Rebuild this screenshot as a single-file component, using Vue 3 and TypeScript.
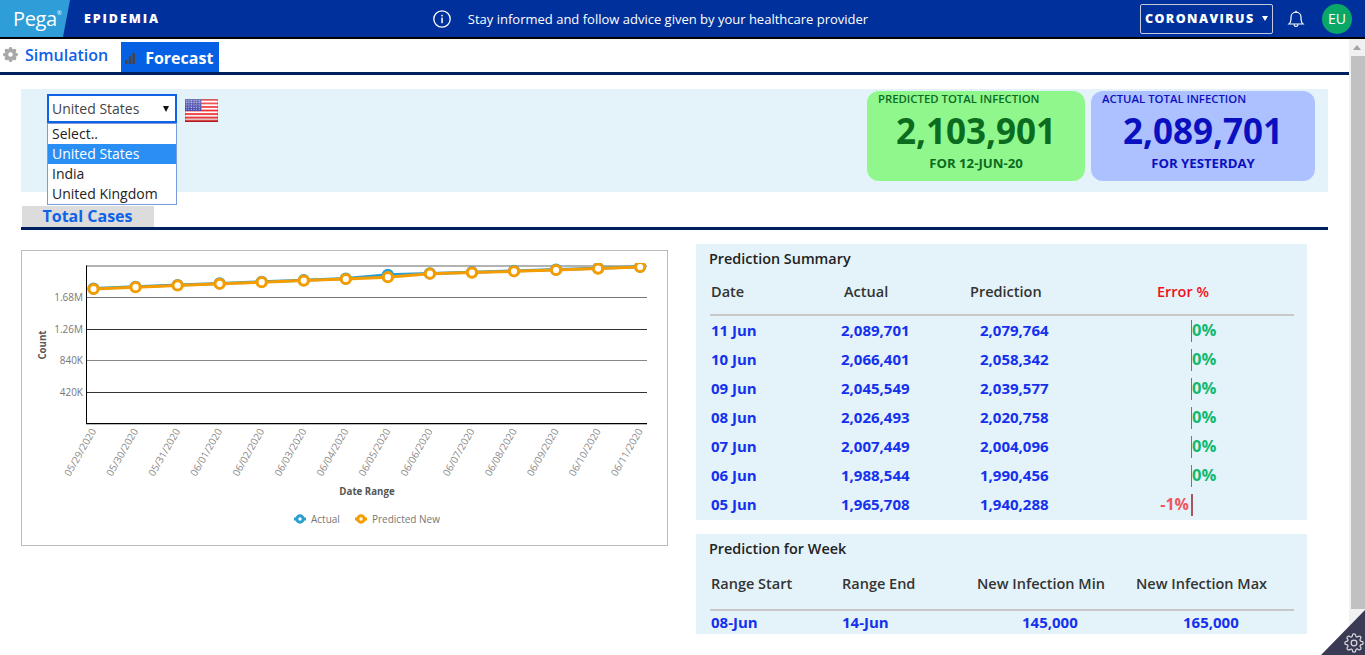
<script setup lang="ts">
const gear =
  'M19.4 15a1.65 1.65 0 0 0 .33 1.82l.06.06a2 2 0 0 1 0 2.83 2 2 0 0 1-2.83 0l-.06-.06a1.65 1.65 0 0 0-1.82-.33 1.65 1.65 0 0 0-1 1.51V21a2 2 0 0 1-2 2 2 2 0 0 1-2-2v-.09A1.65 1.65 0 0 0 9 19.4a1.65 1.65 0 0 0-1.82.33l-.06.06a2 2 0 0 1-2.83 0 2 2 0 0 1 0-2.83l.06-.06a1.65 1.65 0 0 0 .33-1.82 1.65 1.65 0 0 0-1.51-1H3a2 2 0 0 1-2-2 2 2 0 0 1 2-2h.09A1.65 1.65 0 0 0 4.6 9a1.65 1.65 0 0 0-.33-1.82l-.06-.06a2 2 0 0 1 0-2.83 2 2 0 0 1 2.83 0l.06.06a1.65 1.65 0 0 0 1.82.33H9a1.65 1.65 0 0 0 1-1.51V3a2 2 0 0 1 2-2 2 2 0 0 1 2 2v.09a1.65 1.65 0 0 0 1 1.51 1.65 1.65 0 0 0 1.82-.33l.06-.06a2 2 0 0 1 2.83 0 2 2 0 0 1 0 2.83l-.06.06a1.65 1.65 0 0 0-.33 1.82V9a1.65 1.65 0 0 0 1.51 1H21a2 2 0 0 1 2 2 2 2 0 0 1-2 2h-.09a1.65 1.65 0 0 0-1.51 1z'

const options = ['Select..', 'United States', 'India', 'United Kingdom']

const rows = [
  { date: '11 Jun', actual: '2,089,701', pred: '2,079,764', err: '0%', neg: false },
  { date: '10 Jun', actual: '2,066,401', pred: '2,058,342', err: '0%', neg: false },
  { date: '09 Jun', actual: '2,045,549', pred: '2,039,577', err: '0%', neg: false },
  { date: '08 Jun', actual: '2,026,493', pred: '2,020,758', err: '0%', neg: false },
  { date: '07 Jun', actual: '2,007,449', pred: '2,004,096', err: '0%', neg: false },
  { date: '06 Jun', actual: '1,988,544', pred: '1,990,456', err: '0%', neg: false },
  { date: '05 Jun', actual: '1,965,708', pred: '1,940,288', err: '-1%', neg: true },
]

const dates = [
  '05/29/2020', '05/30/2020', '05/31/2020', '06/01/2020', '06/02/2020', '06/03/2020', '06/04/2020',
  '06/05/2020', '06/06/2020', '06/07/2020', '06/08/2020', '06/09/2020', '06/10/2020', '06/11/2020',
]
const xs = dates.map((_, i) => 93.5 + i * 42.05)
const predY = [289, 287.2, 285.4, 283.8, 282.2, 280.6, 279, 277.2, 273.7, 272.6, 271.3, 270, 268.6, 267]
const actY = [288.6, 286.8, 285, 283.4, 281.8, 280.2, 278.6, 274.8, 273.4, 272.2, 270.9, 269.6, 268.2, 266.8]
const toPts = (ys: number[]) => ys.map((y, i) => `${xs[i]},${y}`).join(' ')
const grid = [
  { y: 297.5, label: '1.68M', color: '#777' },
  { y: 329.5, label: '1.26M', color: '#333' },
  { y: 360.5, label: '840K', color: '#888' },
  { y: 392.5, label: '420K', color: '#333' },
]
const stripes = [0, 2, 4, 6, 8, 10, 12].map((i) => 99 + (i * 23) / 13)
</script>

<template>
  <div class="app">
    <header class="topbar">
      <div class="logo"><span class="logo-text">Pega</span><sup class="reg">®</sup></div>
      <div class="appname">EPIDEMIA</div>
      <div class="notice">
        <svg class="info" width="20" height="20" viewBox="0 0 20 20">
          <circle cx="10" cy="10" r="8.2" fill="none" stroke="#fff" stroke-width="1.3" />
          <rect x="9.3" y="8.6" width="1.5" height="5.6" fill="#fff" />
          <rect x="9.3" y="5.8" width="1.5" height="1.6" fill="#fff" />
        </svg>
        <span>Stay informed and follow advice given by your healthcare provider</span>
      </div>
      <div class="tools">
        <div class="scope"><span>CORONAVIRUS</span><i class="caret"></i></div>
        <svg class="bell" width="20" height="20" viewBox="0 0 20 20" fill="none" stroke="#fff" stroke-width="1.2">
          <path d="M3 15c1.3-1.2 2-2.6 2-5V8.2C5 5.4 7.2 3.2 10 3.2s5 2.2 5 5V10c0 2.4.7 3.8 2 5z" />
          <path d="M8 15.4c.1 1.3.9 2.1 2 2.1s1.9-.8 2-2.1" />
          <path d="M10 1.8v1.4" />
        </svg>
        <div class="avatar">EU</div>
      </div>
    </header>

    <div class="body">
      <main class="main">
        <nav class="tabs">
          <div class="tab">
            <svg width="15" height="15" viewBox="0 0 24 24"><path :d="gear" fill="#a8a8a8" stroke="#a8a8a8" stroke-width="2" /><circle cx="12" cy="12" r="3.6" fill="#fff" /></svg>
            <span>Simulation</span>
          </div>
          <div class="tab active">
            <svg width="12" height="14" viewBox="0 0 12 14"><rect x="1" y="9" width="2.6" height="4" fill="#444" /><rect x="4.7" y="5.5" width="2.6" height="7.5" fill="#444" /><rect x="8.4" y="2" width="2.6" height="11" fill="#444" /></svg>
            <span>Forecast</span>
          </div>
        </nav>

        <section class="filter">
          <div class="picker">
            <div class="select"><span>United States</span><i class="sel-caret"></i></div>
            <ul class="menu">
              <li v-for="o in options" :key="o" :class="{ on: o === 'United States' }">{{ o }}</li>
            </ul>
          </div>
          <svg class="flag" width="33" height="23" viewBox="185 99 33 23">
            <defs>
              <pattern id="stars" x="185" y="99" width="2.6" height="2.4" patternUnits="userSpaceOnUse">
                <rect x="0.6" y="0.6" width="1.1" height="1" fill="#c9cbf0" />
              </pattern>
              <linearGradient id="gloss" x1="0" x2="0" y1="0" y2="1">
                <stop offset="0" stop-color="#fff" stop-opacity="0.3" />
                <stop offset="0.55" stop-color="#fff" stop-opacity="0" />
                <stop offset="1" stop-color="#900" stop-opacity="0.45" />
              </linearGradient>
            </defs>
            <rect x="185" y="99" width="33" height="23" fill="#fff" />
            <rect v-for="y in stripes" :key="y" x="185" :y="y" width="33" height="1.77" fill="#ee2a30" />
            <rect x="185" y="99" width="16.5" height="12" fill="#3f42a8" />
            <rect x="185" y="99" width="16.5" height="12" fill="url(#stars)" />
            <rect x="185" y="99" width="33" height="23" fill="url(#gloss)" />
            <rect x="185.5" y="99.5" width="32" height="22" fill="none" stroke="#00000022" />
          </svg>
          <div class="cards">
            <div class="card green">
              <div class="card-label">PREDICTED TOTAL INFECTION</div>
              <div class="card-num">2,103,901</div>
              <div class="card-foot">FOR 12-JUN-20</div>
            </div>
            <div class="card blue">
              <div class="card-label">ACTUAL TOTAL INFECTION</div>
              <div class="card-num">2,089,701</div>
              <div class="card-foot">FOR YESTERDAY</div>
            </div>
          </div>
        </section>

        <div class="subtabs"><div class="subtab">Total Cases</div></div>

        <div class="content">
          <div class="chart">
            <svg width="645" height="294" viewBox="22 251 645 294">
              <defs>
                <clipPath id="plot"><rect x="22" y="263" width="645" height="170" /></clipPath>
              </defs>
              <line x1="86" x2="647" y1="266" y2="266" stroke="#666" stroke-width="1" />
              <g v-for="g in grid" :key="g.y">
                <line x1="86" x2="647" :y1="g.y" :y2="g.y" :stroke="g.color" stroke-width="1" />
                <text x="83" :y="g.y + 3.5" text-anchor="end" class="tick">{{ g.label }}</text>
              </g>
              <line x1="86.5" x2="86.5" y1="265.5" y2="424" stroke="#000" />
              <line x1="86" x2="647" y1="423.5" y2="423.5" stroke="#000" />
              <line x1="86" x2="647" y1="424.5" y2="424.5" stroke="#bbb" />
              <text class="axis" text-anchor="middle" transform="translate(46 345) rotate(-90)">Count</text>
              <text class="axis" x="367" y="495" text-anchor="middle">Date Range</text>
              <text
                v-for="(d, i) in dates"
                :key="d"
                class="tick xt"
                text-anchor="end"
                :transform="`translate(${xs[i] + 3} 431) rotate(-60)`"
              >{{ d }}</text>
              <g clip-path="url(#plot)">
                <polyline :points="toPts(actY)" fill="none" stroke="#2b9fd1" stroke-width="3" />
                <circle v-for="(y, i) in actY" :key="'a' + i" :cx="xs[i]" :cy="y" r="4.6" fill="#fff" stroke="#2b9fd1" stroke-width="3" />
                <polyline :points="toPts(predY)" fill="none" stroke="#f59d00" stroke-width="3" />
                <circle v-for="(y, i) in predY" :key="'p' + i" :cx="xs[i]" :cy="y" r="4.6" fill="#fff" stroke="#f59d00" stroke-width="3" />
              </g>
              <g>
                <line x1="294" x2="306" y1="519" y2="519" stroke="#2b9fd1" stroke-width="3" />
                <circle cx="300" cy="519" r="3.2" fill="#fff" stroke="#2b9fd1" stroke-width="3" />
                <text class="tick" x="311" y="522.5">Actual</text>
                <line x1="355" x2="367" y1="519" y2="519" stroke="#f59d00" stroke-width="3" />
                <circle cx="361" cy="519" r="3.2" fill="#fff" stroke="#f59d00" stroke-width="3" />
                <text class="tick" x="372" y="522.5">Predicted New</text>
              </g>
            </svg>
          </div>

          <div class="side">
            <section class="box">
              <h3>Prediction Summary</h3>
              <div class="thead sum">
                <span>Date</span><span>Actual</span><span>Prediction</span><span class="err-h">Error %</span>
              </div>
              <div v-for="r in rows" :key="r.date" class="trow sum-row">
                <span>{{ r.date }}</span>
                <span>{{ r.actual }}</span>
                <span>{{ r.pred }}</span>
                <span class="err">
                  <b class="neg">{{ r.neg ? r.err : '' }}</b>
                  <i class="bar" :class="{ red: r.neg }"></i>
                  <b class="pos">{{ r.neg ? '' : r.err }}</b>
                </span>
              </div>
            </section>
            <section class="box week">
              <h3>Prediction for Week</h3>
              <div class="thead wk">
                <span>Range Start</span><span>Range End</span><span>New Infection Min</span><span>New Infection Max</span>
              </div>
              <div class="trow wk wk-row">
                <span>08-Jun</span><span>14-Jun</span><span class="v1">145,000</span><span class="v2">165,000</span>
              </div>
            </section>
          </div>
        </div>
      </main>

      <aside class="scrollbar">
        <div class="arrow"></div>
        <div class="thumb"></div>
      </aside>
    </div>

    <div class="corner">
      <svg width="20" height="20" viewBox="0 0 24 24" fill="none" stroke="#d8d8de" stroke-width="1.5"><circle cx="12" cy="12" r="3.4" /><path :d="gear" /></svg>
    </div>
  </div>
</template>

<style>
html, body { margin: 0; background: #fff; }
</style>

<style scoped>
.app {
  position: relative;
  width: 1365px;
  height: 655px;
  overflow: hidden;
  display: flex;
  flex-direction: column;
  font-family: "Open Sans", "Noto Sans", sans-serif;
  background: #fff;
}
.topbar {
  height: 37px;
  flex: none;
  display: flex;
  align-items: center;
  background: #00309b;
  border-bottom: 2px solid #000;
  color: #fff;
}
.logo {
  width: 70px;
  height: 37px;
  box-sizing: border-box;
  padding-left: 13px;
  display: flex;
  align-items: center;
  background: #2e9dd8;
  clip-path: polygon(0 0, 100% 0, 90% 100%, 0 100%);
}
.logo-text { font-size: 20px; letter-spacing: -0.4px; }
.reg { font-size: 6px; margin: 0 0 12px 0; line-height: 1; }
.appname {
  margin-left: 14px;
  font-size: 12.5px;
  font-weight: 800;
  letter-spacing: 1.9px;
}
.notice {
  margin-left: 272px;
  display: flex;
  align-items: center;
  gap: 16px;
  font-size: 13px;
}
.info { flex: none; }
.tools {
  margin-left: auto;
  display: flex;
  align-items: center;
  padding-right: 13px;
}
.scope {
  width: 133px;
  height: 30px;
  box-sizing: border-box;
  border: 1px solid #c5cbdc;
  border-radius: 2px;
  display: flex;
  align-items: center;
  padding-left: 4px;
  font-size: 12.5px;
  font-weight: 800;
  letter-spacing: 1.4px;
}
.caret {
  margin-left: 7px;
  width: 0;
  height: 0;
  border-left: 3px solid transparent;
  border-right: 3px solid transparent;
  border-top: 5px solid #fff;
}
.bell { margin-left: 13px; }
.avatar {
  width: 30px;
  height: 30px;
  margin-left: 16px;
  border-radius: 50%;
  background: #0aa868;
  display: flex;
  align-items: center;
  justify-content: center;
  font-size: 14px;
}
.body { flex: 1; min-height: 0; display: flex; }
.main { flex: 1; min-width: 0; }
.tabs {
  height: 33px;
  display: flex;
  align-items: flex-end;
  border-bottom: 3px solid #001f5f;
  padding-left: 3px;
}
.tab {
  height: 30px;
  display: flex;
  align-items: center;
  gap: 7px;
  color: #0e62e8;
  font-size: 16px;
  font-weight: 600;
}
.tab:first-child { box-sizing: border-box; height: 33px; padding-bottom: 2px; }
.tab.active {
  margin-left: 13px;
  width: 98px;
  box-sizing: border-box;
  padding: 1px 0 0 3px;
  gap: 9px;
  background: #0660e4;
  color: #fff;
  font-weight: 700;
}
.filter {
  position: relative;
  height: 103px;
  margin: 14px 21px 0;
  background: #e4f3f9;
  display: flex;
  align-items: flex-start;
}
.picker { position: relative; margin: 5px 0 0 26px; width: 130px; }
.select {
  height: 29px;
  box-sizing: border-box;
  border: 2px solid #0e62e8;
  background: #fff;
  display: flex;
  align-items: center;
  justify-content: space-between;
  padding: 0 6px 0 3px;
  font-size: 14px;
  color: #444;
}
.sel-caret {
  width: 0;
  height: 0;
  border-left: 3px solid transparent;
  border-right: 3px solid transparent;
  border-top: 6px solid #111;
}
.menu {
  position: absolute;
  top: 29px;
  left: 0;
  width: 130px;
  box-sizing: border-box;
  margin: 0;
  padding: 0;
  list-style: none;
  background: #fff;
  border: 1px solid #7a9bdc;
  z-index: 2;
}
.menu li {
  height: 20px;
  line-height: 20px;
  padding-left: 4px;
  font-size: 14px;
  color: #222;
}
.menu li.on { background: #2a8ff5; color: #fff; }
.flag { margin: 10px 0 0 8px; flex: none; }
.cards { margin: 2px 13px 0 auto; display: flex; gap: 6px; }
.card {
  width: 218px;
  height: 90px;
  border-radius: 12px;
  box-sizing: border-box;
  text-align: center;
  color: #0b6b1f;
  background: #90f78c;
}
.card.blue { width: 224px; background: #adc0ff; color: #0a10c0; }
.card-label {
  text-align: left;
  padding-left: 11px;
  font-size: 11.35px;
  font-weight: 600;
  line-height: 16px;
}
.card-num { font-size: 35px; font-weight: 700; line-height: 48px; }
.card-foot { font-size: 13.2px; font-weight: 700; line-height: 16px; }
.subtabs {
  margin: 14px 21px 0;
  border-bottom: 3px solid #001f5f;
  height: 21px;
}
.subtab {
  width: 132px;
  height: 21px;
  margin-left: 1px;
  padding-right: 1px;
  box-sizing: border-box;
  line-height: 21px;
  background: #dcdcdc;
  color: #0e62e8;
  font-size: 16px;
  font-weight: 700;
  text-align: center;
}
.content {
  margin: 14px 42px 0 21px;
  display: flex;
  align-items: flex-start;
}
.chart {
  width: 647px;
  height: 296px;
  box-sizing: border-box;
  margin-top: 6px;
  border: 1px solid #bbb;
}
.chart svg { display: block; }
.tick { font-size: 10px; fill: #777; font-family: "Open Sans", sans-serif; }
.xt { font-size: 10px; fill: #888; }
.axis { font-size: 9.7px; font-weight: 700; fill: #555; font-family: "Open Sans", sans-serif; }
.side { margin-left: 28px; width: 611px; flex: none; }
.box {
  background: #e4f3f9;
  padding: 5px 13px 1px 14px;
  height: 276px;
  box-sizing: border-box;
}
.box.week { margin-top: 14px; height: 100px; padding-bottom: 0; }
h3 {
  margin: 0 0 0 -1px;
  font-size: 14.4px;
  line-height: 20px;
  font-weight: 600;
  color: #222;
}
.thead {
  display: grid;
  height: 22px;
  line-height: 22px;
  margin-top: 12px;
  padding: 0 0 11px 1px;
  font-size: 14.5px;
  font-weight: 600;
  color: #333;
  border-bottom: 2px solid #c8c8c8;
}
.thead.sum { grid-template-columns: 133px 126px 187px 1fr; }
.err-h { color: #f01020; }
.thead.wk { grid-template-columns: 131px 135px 159px 1fr; margin-top: 14px; padding-bottom: 14px; }
.trow {
  display: grid;
  padding-left: 1px;
  font-size: 15px;
  font-weight: 700;
  color: #1530ee;
}
.sum-row { height: 29px; line-height: 29px; grid-template-columns: 130px 139px 168px 1fr; }
.wk-row { height: 23px; line-height: 23px; grid-template-columns: 131px 135px 159px 1fr; }
.v1 { padding-left: 45px; }
.v2 { padding-left: 47px; }
.err { display: flex; align-items: center; font-size: 16.5px; }
.neg { width: 43px; padding-right: 2px; box-sizing: border-box; text-align: right; color: #f0565f; white-space: nowrap; font-weight: 700; font-size: 16px; margin-top: -1px; }
.bar { width: 1px; height: 22px; background: #777; flex: none; }
.bar.red { width: 2px; background: #a8555c; }
.pos { color: #14b86e; font-weight: 700; margin-top: -2px; }
.scrollbar {
  width: 16px;
  flex: none;
  background: #f1f1f1;
  display: flex;
  flex-direction: column;
  align-items: flex-end;
}
.arrow {
  width: 0;
  height: 0;
  margin: 6px 4px 6px 0;
  border-left: 4px solid transparent;
  border-right: 4px solid transparent;
  border-bottom: 5px solid #a3a3a3;
}
.thumb { width: 14px; height: 553px; background: #c1c1c1; }
.corner {
  position: absolute;
  right: 0;
  bottom: 0;
  width: 44px;
  height: 45px;
  background: #3a3a55;
  clip-path: polygon(100% 0, 100% 100%, 0 100%);
}
.corner svg { position: absolute; right: 1px; bottom: 2px; }
</style>
